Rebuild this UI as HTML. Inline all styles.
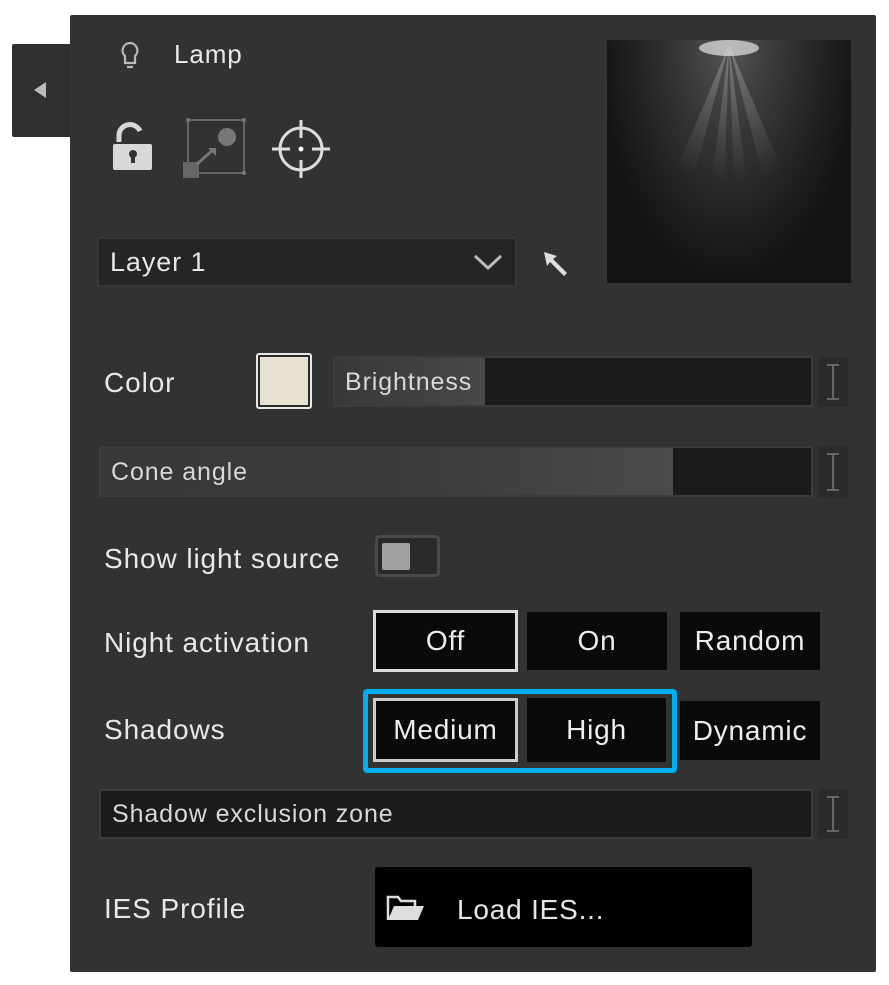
<!DOCTYPE html>
<html><head><style>
body{margin:0;width:889px;height:985px;background:#fff;position:relative;overflow:hidden;font-family:"Liberation Sans",sans-serif;color:#e6e6e6}
.a{position:absolute;box-sizing:border-box}
.lbl{font-size:28px;color:#e8e8e8;line-height:1;letter-spacing:0.9px;white-space:nowrap}
.bar{background:#1b1b1b;border:2px solid #3c3c3c;font-size:25px;color:#d8d8d8;padding-left:11px;display:flex;align-items:center;letter-spacing:0.9px;white-space:nowrap}
.ib{background:#2b2b2b}
.btn{background:#0a0a0a;font-size:28px;color:#eee;display:flex;align-items:center;justify-content:center;letter-spacing:0.8px}
</style></head><body>
<div class="a" style="left:12px;top:44px;width:62px;height:93px;background:#2f2f2f;border-radius:2px"></div>
<div class="a" style="left:34px;top:82px;width:0;height:0;border-top:8px solid transparent;border-bottom:8px solid transparent;border-right:12px solid #bbb"></div>
<div class="a" style="left:70px;top:15px;width:806px;height:957px;background:#323232;border-radius:2px"></div>
<svg class="a" style="left:118px;top:40px" width="24" height="32" viewBox="0 0 24 32"><path d="M12 3a7.5 7.5 0 0 0-5 13V23h10v-7A7.5 7.5 0 0 0 12 3z" fill="none" stroke="#bbb" stroke-width="2.2"/><path d="M9 27h6" stroke="#bbb" stroke-width="2.2"/></svg>
<div class="a lbl" style="left:174px;top:41px;font-size:26px">Lamp</div>
<svg class="a" style="left:112px;top:120px" width="42" height="52" viewBox="0 0 42 52"><path d="M7 22v-7a11 11 0 0 1 21-4" fill="none" stroke="#d8d8d8" stroke-width="5"/><rect x="1" y="24" width="39" height="26" rx="2" fill="#d8d8d8"/><circle cx="21" cy="34" r="4" fill="#333"/><rect x="19" y="34" width="4" height="9" fill="#333"/></svg>
<svg class="a" style="left:180px;top:115px" width="68" height="66" viewBox="0 0 68 66"><rect x="8" y="5" width="56" height="53" fill="none" stroke="#777" stroke-width="1.5"/><circle cx="8" cy="5" r="2" fill="#777"/><circle cx="64" cy="5" r="2" fill="#777"/><circle cx="64" cy="58" r="2" fill="#777"/><circle cx="47" cy="22" r="9" fill="#777"/><rect x="3" y="47" width="16" height="16" fill="#666"/><path d="M17 49l17-15" stroke="#777" stroke-width="3"/><path d="M28 33h8v8z" fill="#777"/></svg>
<svg class="a" style="left:270px;top:118px" width="62" height="62" viewBox="0 0 62 62"><circle cx="31" cy="31" r="21" fill="none" stroke="#ddd" stroke-width="3"/><path d="M31 2v18M31 42v18M2 31h18M42 31h18" stroke="#ddd" stroke-width="3"/><circle cx="31" cy="31" r="2.5" fill="#fff"/></svg>
<div class="a" style="left:607px;top:40px;width:244px;height:243px;background:radial-gradient(ellipse 130px 240px at 50% 0%,#555 0%,#363636 40%,#1e1e1e 80%,#141414 100%);overflow:hidden">
<svg width="244" height="243" viewBox="0 0 244 243" style="display:block"><defs><radialGradient id="g" cx="122" cy="0" r="140" gradientUnits="userSpaceOnUse"><stop offset="0" stop-color="#fff" stop-opacity=".55"/><stop offset="1" stop-color="#fff" stop-opacity="0"/></radialGradient></defs>
<path d="M122 5L40 200L70 200Z M122 5L95 220L115 220Z M122 5L130 220L150 220Z M122 5L175 210L205 200Z" fill="url(#g)" opacity=".5"/>
<ellipse cx="122" cy="8" rx="30" ry="8" fill="#fff" opacity=".6"/></svg></div>
<div class="a bar" style="left:97px;top:237px;width:420px;height:50px;background:#252525;border-color:#363636;font-size:27px;color:#e6e6e6">Layer 1</div>
<svg class="a" style="left:472px;top:252px" width="32" height="20" viewBox="0 0 32 20"><path d="M3 4l13 12 13-12" fill="none" stroke="#bbb" stroke-width="3"/></svg>
<svg class="a" style="left:540px;top:248px" width="34" height="32" viewBox="0 0 34 32"><path d="M4 4l13 4-4 3 14 14-3 3-14-14-3 4z" fill="#ddd"/></svg>
<div class="a lbl" style="left:104px;top:369px">Color</div>
<div class="a" style="left:256px;top:353px;width:56px;height:56px;border:2px solid #e8e8e8;border-radius:3px;background:#2a2a2a;padding:2px"><div style="width:100%;height:100%;background:#e7e2d2"></div></div>
<div class="a bar" style="left:333px;top:356px;width:480px;height:51px"></div>
<div class="a" style="left:335px;top:358px;width:150px;height:47px;background:linear-gradient(90deg,#383838,#484848)"></div>
<div class="a" style="left:345px;top:368px;font-size:25px;color:#d8d8d8;letter-spacing:0.9px">Brightness</div>
<div class="a bar" style="left:99px;top:446px;width:714px;height:51px"></div>
<div class="a" style="left:101px;top:448px;width:572px;height:47px;background:linear-gradient(90deg,#383838,#3a3a3a 50%,#4a4a4a)"></div>
<div class="a" style="left:111px;top:458px;font-size:25px;color:#d8d8d8;letter-spacing:0.9px">Cone angle</div>
<svg class="a ib" style="left:818px;top:357px" width="30" height="50" viewBox="0 0 30 50"><path d="M9 8h12M15 8v34M9 42h12" stroke="#666" stroke-width="2" fill="none"/></svg>
<svg class="a ib" style="left:818px;top:446px" width="30" height="52" viewBox="0 0 30 52"><path d="M9 8h12M15 8v36M9 44h12" stroke="#666" stroke-width="2" fill="none"/></svg>
<svg class="a ib" style="left:818px;top:789px" width="30" height="50" viewBox="0 0 30 50"><path d="M9 8h12M15 8v34M9 42h12" stroke="#666" stroke-width="2" fill="none"/></svg>
<div class="a lbl" style="left:104px;top:545px">Show light source</div>
<div class="a" style="left:375px;top:535px;width:65px;height:42px;border:3px solid #4a4a4a;border-radius:4px;background:#2a2a2a"></div>
<div class="a" style="left:382px;top:543px;width:28px;height:27px;background:#a2a2a2;border-radius:2px"></div>
<div class="a lbl" style="left:104px;top:629px">Night activation</div>
<div class="a btn" style="left:373px;top:610px;width:145px;height:62px;border:3px solid #ddd">Off</div>
<div class="a btn" style="left:527px;top:612px;width:140px;height:58px">On</div>
<div class="a btn" style="left:680px;top:612px;width:140px;height:58px">Random</div>
<div class="a lbl" style="left:104px;top:716px">Shadows</div>
<div class="a" style="left:363px;top:689px;width:314px;height:84px;border:5px solid #00aeef;border-radius:4px"></div>
<div class="a btn" style="left:373px;top:698px;width:145px;height:64px;border:3px solid #ccc">Medium</div>
<div class="a btn" style="left:527px;top:698px;width:139px;height:64px">High</div>
<div class="a btn" style="left:680px;top:701px;width:140px;height:59px">Dynamic</div>
<div class="a bar" style="left:99px;top:789px;width:714px;height:50px">Shadow exclusion zone</div>
<div class="a lbl" style="left:104px;top:895px">IES Profile</div>
<div class="a" style="left:375px;top:867px;width:377px;height:80px;background:#000;border-radius:3px"></div>
<svg class="a" style="left:385px;top:892px" width="40" height="32" viewBox="0 0 40 32"><path d="M3 28V5h10l3 4h14v5" fill="none" stroke="#ddd" stroke-width="2.5"/><path d="M3 28l6-14h30l-6 14z" fill="#ddd"/></svg>
<div class="a" style="left:457px;top:894px;font-size:28px;color:#e6e6e6;letter-spacing:0.8px">Load IES...</div>
</body></html>
